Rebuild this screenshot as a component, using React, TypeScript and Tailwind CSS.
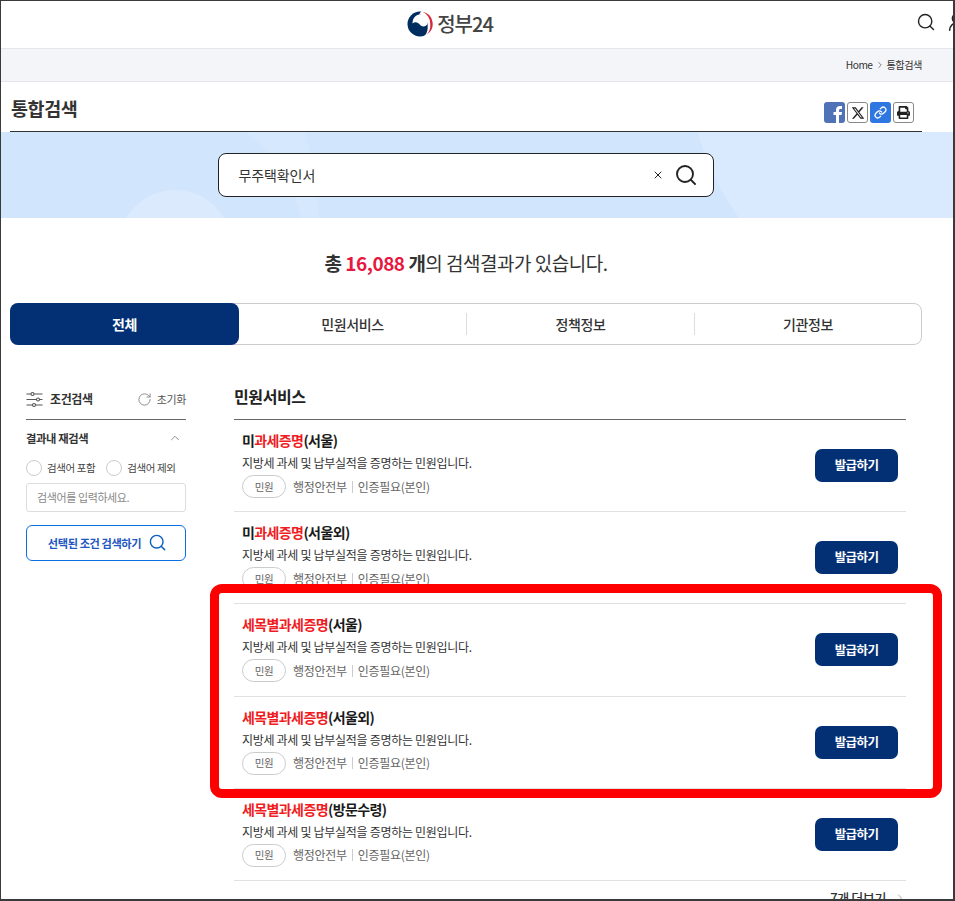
import { RotateCw, Search, ChevronUp, ChevronRight, X, Link, UserRound } from "lucide-react";
import { FaPrint } from "react-icons/fa";
import { FaXTwitter } from "react-icons/fa6";

const FONT = "font-['Noto_Sans_CJK_KR','Noto_Sans',sans-serif]";

interface Row {
  red: string;
  pre?: string;
  rest: string;
}

const rows: Row[] = [
  { pre: "미", red: "과세증명", rest: "(서울)" },
  { pre: "미", red: "과세증명", rest: "(서울외)" },
  { red: "세목별과세증명", rest: "(서울)" },
  { red: "세목별과세증명", rest: "(서울외)" },
  { red: "세목별과세증명", rest: "(방문수령)" },
];

const Logo = () => (
  <svg width="26" height="26" viewBox="0 0 26 26">
    <circle cx="13" cy="13" r="12.5" fill="#002d5f" />
    <path d="M12.500 3.500C9 3.500 5.500 7 5.500 12.500C7.500 10.500 11 10.800 13 13.800C15 16.500 19.500 16 20.500 12.500C21 8 17.500 3.500 12.500 3.500Z" fill="#fff" />
    <path d="M12 3.500L14.500 0H26V26H16C19 24.500 21.500 20 20.500 12.500C19.500 7 16 3.500 12 3.500Z" fill="#fff" />
    <path d="M15.500 0.800A12.400 12.400 0 0 1 20 23.400A13.500 13.500 0 0 0 23.200 13A12.500 12.500 0 0 0 15.500 0.800Z" fill="#d8263c" />
  </svg>
);

const FilterIcon = () => (
  <svg width="17" height="17" viewBox="0 0 17 17" fill="none" stroke="#555" strokeWidth="1.1">
    <path d="M0.500 3H5M8 3H16.500M0.500 8.500H10.500M13.500 8.500H16.500M0.500 14H6.500M9.500 14H16.500" />
    <circle cx="6.500" cy="3" r="1.500" />
    <circle cx="12" cy="8.500" r="1.500" />
    <circle cx="8" cy="14" r="1.500" />
  </svg>
);

const ServiceRow = ({ row }: { row: Row }) => (
  <div className="flex h-[92.2px] items-center justify-between border-b border-[#e1e1e1] px-2">
    <div className="flex flex-col self-start pt-[9px]">
      <div className="text-[14px] leading-[23px] font-bold tracking-[-0.6px] text-[#1a1a1a]">
        {row.pre}
        <span className="text-[#f01c24]">{row.red}</span>
        {row.rest}
      </div>
      <div className="text-[12px] leading-[22px] tracking-[-0.3px] text-[#333]">지방세 과세 및 납부실적을 증명하는 민원입니다.</div>
      <div className="mt-[1px] flex items-center text-[12px] tracking-[-0.3px] text-[#666]">
        <span className="mr-[7px] flex h-[23px] w-[44px] items-center justify-center rounded-full border border-[#ccc] text-[10.5px] text-[#666]">민원</span>
        <span>행정안전부</span>
        <span className="ml-[5px] mr-[5px] h-[12px] w-px bg-[#ccc]"></span>
        <span>인증필요(본인)</span>
      </div>
    </div>
    <button className="h-[33px] w-[83px] rounded-[7px] bg-[#033075] text-[12.5px] font-bold tracking-[-0.6px] text-white">발급하기</button>
  </div>
);

export default function App() {
  return (
    <div className={`${FONT} relative h-[901px] w-[955px] overflow-hidden border-2 border-l border-t border-[#3a3a3a] bg-white tracking-[-0.4px]`}>
      {/* header */}
      <header className="relative flex h-[48px] items-center justify-center gap-[4px] border-b border-[#e4e6ec] pb-[1px] pr-[54px]">
        <Logo />
        <span className="text-[20px] font-medium tracking-[-1px] text-[#444]">정부24</span>
        <div className="absolute right-[-15px] top-[10px] flex items-center gap-[10px] text-[#222]">
          <Search size={20} strokeWidth={1.7} />
          <UserRound size={22} strokeWidth={1.7} />
        </div>
      </header>

      {/* breadcrumb */}
      <div className="flex h-[33px] items-center justify-end gap-[2px] border-b border-[#e4e6ec] bg-[#f4f5f9] pr-[31px] text-[10.2px] tracking-[-0.5px] text-[#333]">
        <span>Home</span>
        <ChevronRight size={10} strokeWidth={1.4} />
        <span>통합검색</span>
      </div>

      {/* title */}
      <div className="mx-[9px] flex h-[50px] w-[912px] items-center justify-between border-b border-[#333]">
        <h1 className="pl-[1px] pt-[4px] text-[18.5px] font-bold text-[#333]">통합검색</h1>
        <div className="mr-[8px] mt-[12px] flex items-center gap-[2px]">
          <svg width="21" height="21" viewBox="0 0 21 21">
            <rect width="21" height="21" rx="3" fill="#4f73b6" />
            <path d="M12 21V13H9.500V10H12V8C12 5.500 13.500 4 16 4H18V7H16.500C15.500 7 15 7.500 15 8.500V10H18L17.500 13H15V21Z" fill="#fff" />
          </svg>
          <span className="flex h-[21px] w-[21px] items-center justify-center rounded-[3px] border border-[#888] text-[#222]">
            <FaXTwitter size={14} />
          </span>
          <span className="flex h-[21px] w-[21px] items-center justify-center rounded-[3px] bg-[#2e77e0] text-white">
            <Link size={13} strokeWidth={2.4} />
          </span>
          <span className="flex h-[21px] w-[21px] items-center justify-center rounded-[3px] border border-[#888] text-[#222]">
            <FaPrint size={13} />
          </span>
        </div>
      </div>

      {/* search band */}
      <div className="relative flex h-[86px] items-center justify-center overflow-hidden bg-[#d1e5fd] pr-[23px]">
        <svg className="absolute left-0 top-0" width="953" height="86" viewBox="0 0 953 86">
          <ellipse cx="174" cy="118" rx="58" ry="60" fill="#dbeafd" />
          <path d="M244 0H304C312 30 316 60 318 86H300C292 50 272 20 244 0Z" fill="#d6e8fd" />
          <path d="M697 0H953V86H738C720 60 704 30 697 0Z" fill="#d9e9fe" />
        </svg>
        <div className="relative flex h-[44px] w-[496px] items-center justify-between rounded-lg border border-[#222] bg-white pl-[20px] pr-[15px]">
          <span className="text-[14px] tracking-[-0.1px] text-[#333]">무주택확인서</span>
          <div className="flex items-center gap-[10px] text-[#222]">
            <X size={12} strokeWidth={2} />
            <Search size={24} strokeWidth={1.9} />
          </div>
        </div>
      </div>

      {/* count */}
      <div className="mt-[30px] pr-[22px] text-center text-[19px] leading-[30px] tracking-[-0.5px] text-[#333]">
        <b>총 <span className="text-[#e8173f]">16,088</span> 개</b>의 검색결과가 있습니다.
      </div>

      {/* tabs */}
      <div className="ml-[9px] mt-[25px] flex h-[42px] w-[912px] items-center rounded-lg border border-[#ccc] text-[14px] font-medium text-[#333]">
        <div className="-my-px -ml-px flex h-[42px] w-[229px] items-center justify-center rounded-lg bg-[#033075] font-bold text-white">전체</div>
        <div className="flex h-[22px] w-[228px] items-center justify-center border-r border-[#ddd]">민원서비스</div>
        <div className="flex h-[22px] w-[228px] items-center justify-center border-r border-[#ddd]">정책정보</div>
        <div className="flex h-[22px] w-[226px] items-center justify-center">기관정보</div>
      </div>

      {/* content */}
      <div className="flex">
        {/* sidebar */}
        <aside className="ml-[25px] mt-[32px] w-[160px]">
          <div className="flex h-[43px] items-start justify-between border-b border-[#666] pt-[13px]">
            <div className="flex items-center gap-[7px] text-[12px] font-bold text-[#333]">
              <FilterIcon />
              조건검색
            </div>
            <div className="flex items-center gap-[5px] pt-[1px] text-[11px] text-[#555]">
              <RotateCw size={15} strokeWidth={1.5} className="text-[#888]" />
              초기화
            </div>
          </div>
          <div className="mt-[10px] flex items-center justify-between pr-[4px] text-[11.3px] font-bold text-[#333]">
            결과내 재검색
            <ChevronUp size={14} strokeWidth={1.4} className="text-[#777]" />
          </div>
          <div className="mt-[13px] flex items-center text-[10.5px] text-[#444]">
            <span className="mr-[5px] h-[16px] w-[16px] rounded-full border border-[#ccc]"></span>
            <span className="mr-[11px]">검색어 포함</span>
            <span className="mr-[5px] h-[16px] w-[16px] rounded-full border border-[#ccc]"></span>
            <span>검색어 제외</span>
          </div>
          <div className="mt-[7px] flex h-[29px] items-center rounded-[3px] border border-[#ddd] pl-[10px] text-[11px] text-[#888]">검색어를 입력하세요.</div>
          <div className="mt-[13px] flex h-[36px] items-center justify-center gap-[7px] rounded-md border border-[#0b6fe0] pl-[3px] text-[11.2px] font-bold text-[#2256c0]">
            선택된 조건 검색하기
            <Search size={19} strokeWidth={1.8} className="text-[#0b5fc0]" />
          </div>
        </aside>

        {/* results */}
        <main className="ml-[48px] mt-[27px] w-[672px]">
          <div className="flex h-[48px] items-start border-b border-[#666] pt-[12px] text-[16px] font-bold leading-[24px] text-[#222]">민원서비스</div>
          {rows.map((row, i) => (
            <ServiceRow key={i} row={row} />
          ))}
          <div className="mt-[7px] flex items-center justify-end gap-[8px] text-[13px] font-medium text-[#333]">
            7개 더보기
            <ChevronRight size={12} strokeWidth={1.4} className="text-[#888]" />
          </div>
        </main>
      </div>

      {/* annotation */}
      <div className="absolute left-[209px] top-[583px] h-[214px] w-[732px] rounded-[12px] border-[9px] border-[#ff0000]"></div>
    </div>
  );
}
